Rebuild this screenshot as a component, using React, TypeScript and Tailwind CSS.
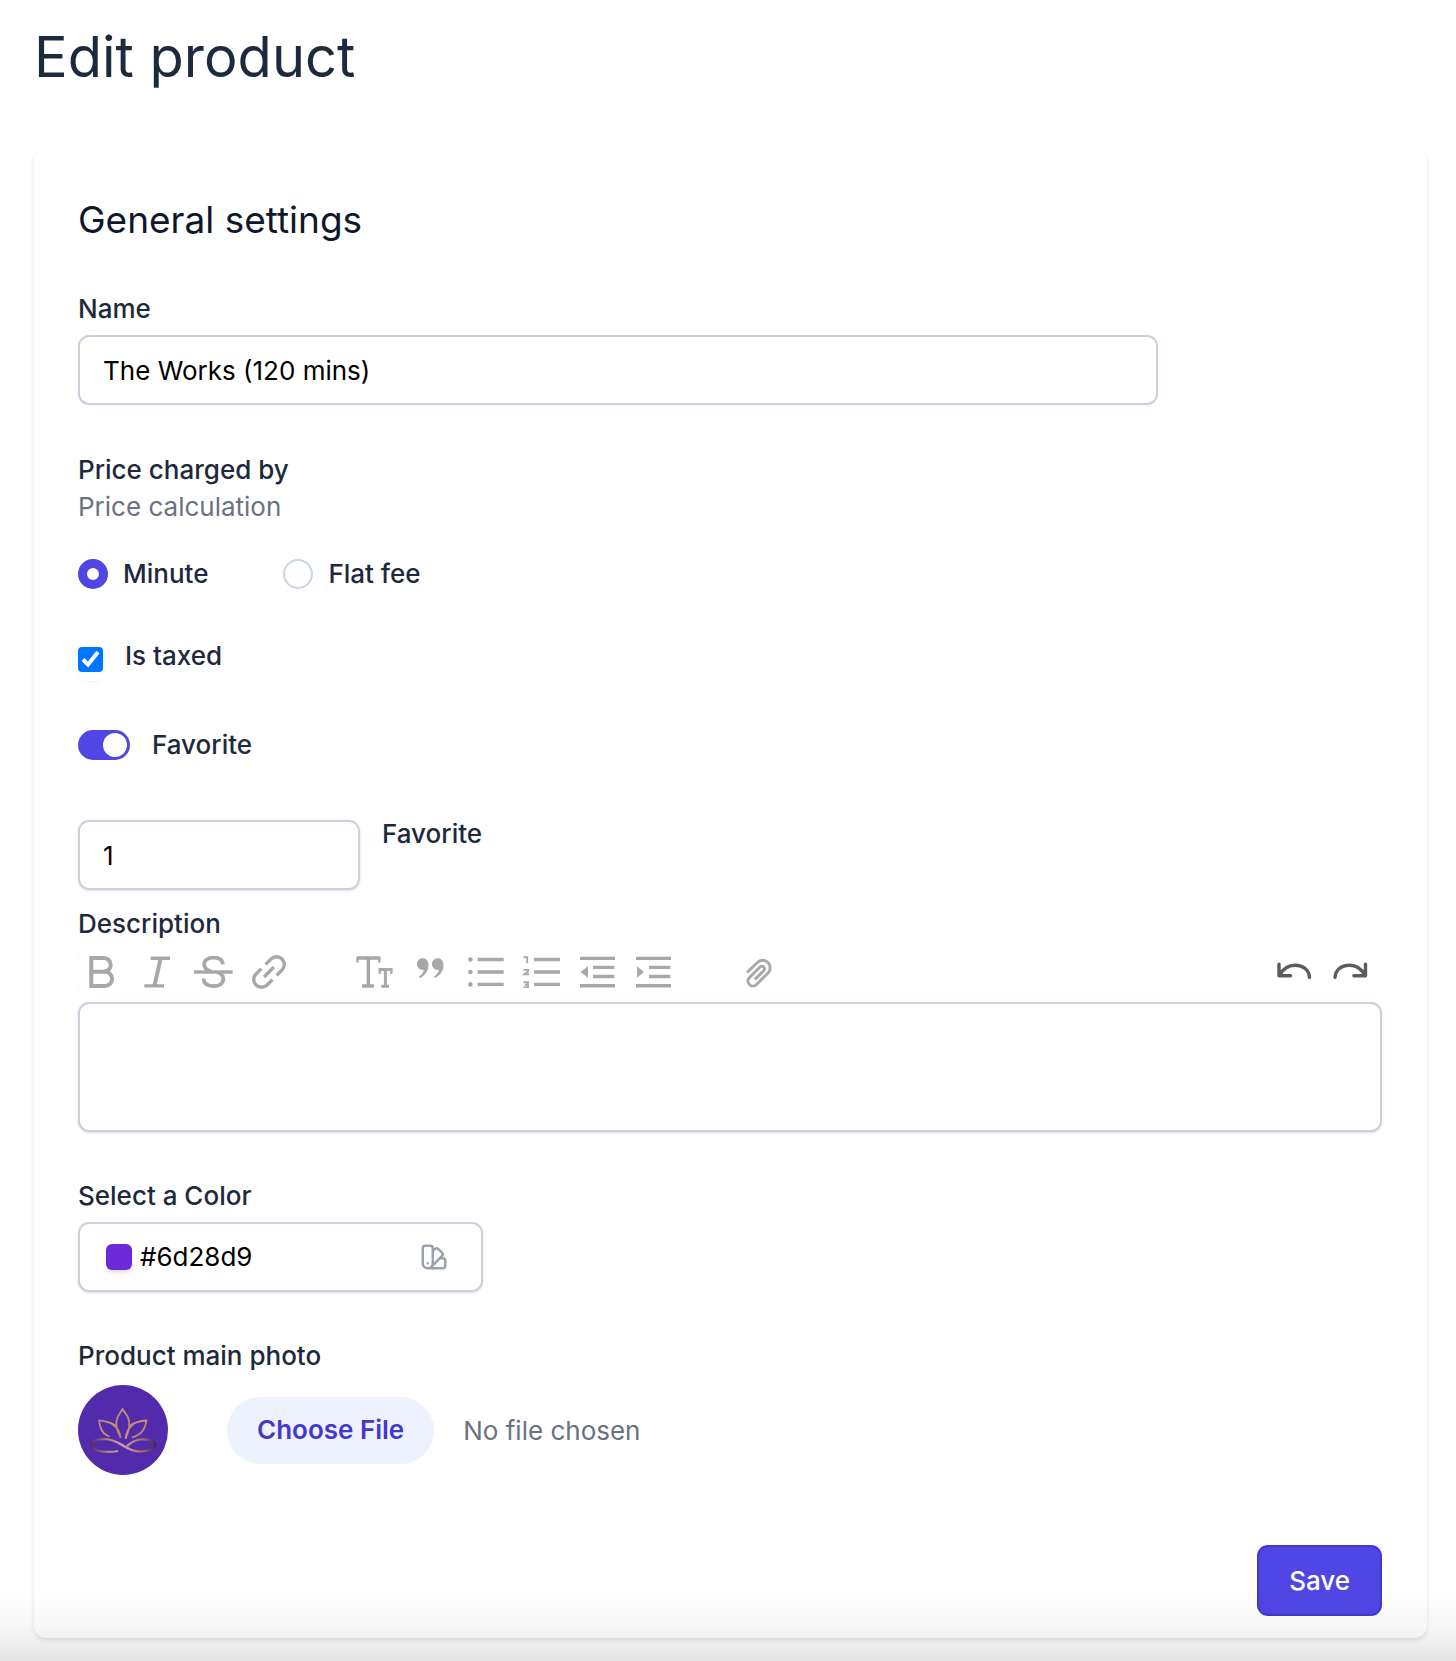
import React, { ReactNode } from "react";
import { HiOutlineColorSwatch } from "react-icons/hi";

type ToolProps = {
  label: string;
  children: ReactNode;
  dark?: boolean;
};

const Tool = ({ label, children, dark }: ToolProps) => {
  return (
    <button
      type="button"
      aria-label={label}
      className={
        dark ? "size-12 shrink-0 text-[#5c5c5c]" : "size-12 shrink-0 text-[#a8a8a8]"
      }
    >
      <svg
        viewBox="0 0 48 48"
        className="size-12"
        fill="none"
        stroke="currentColor"
        strokeWidth="3.4"
      >
        {children}
      </svg>
    </button>
  );
};

const Toolbar = () => {
  return (
    <div className="mt-1.5 flex gap-14 rounded-xl pr-2 shadow-[0_0_2px_rgba(0,0,0,0.06)]">
      <div className="flex gap-2">
        <Tool label="Bold">
          <path
            strokeWidth="4"
            d="M13.3 10H25.8a6.8 6.8 0 0 1 0 13.8H13.3ZM13.3 23.8H27a7.1 7.1 0 0 1 0 14.2H13.3Z"
          />
        </Tool>
        <Tool label="Italic">
          <path d="M16.7 10.3H36M10.3 37.9H30" />
          <path strokeWidth="4" d="M26.6 10.5 20.4 38" />
        </Tool>
        <Tool label="Strikethrough">
          <path
            strokeWidth="3.8"
            d="M33 16.4C32.5 12 29 9.7 23.6 9.7c-5.6 0-9.4 2.7-9.4 6.9 0 3.6 2.4 5.6 7 7M27.5 24.2c4 1.3 5.8 3.4 5.8 6.5 0 4.6-3.8 7.4-9.6 7.4-6.2 0-10-2.8-10.3-7.6"
          />
          <path d="M4 24H42.7" />
        </Tool>
        <Tool label="Link">
          <g transform="translate(23 24) rotate(-45)">
            <path d="M-3-7.8H-10.6a7.8 7.8 0 0 0 0 15.6H-3M3-7.8H10.6a7.8 7.8 0 0 1 0 15.6H3M-7 0H7" />
          </g>
        </Tool>
      </div>
      <div className="flex gap-2">
        <Tool label="Heading">
          <path d="M6.5 10H30.3M18.3 10V38M12 38H24" />
          <path strokeWidth="2.4" d="M7.5 10V14.5M29.2 10V14.5M29.8 21V25.8M41.3 21V25.8" />
          <path strokeWidth="3" d="M28.7 21.4H42.4M35.4 21V38M31.3 38.2H39" />
        </Tool>
        <Tool label="Quote">
          <g fill="currentColor" stroke="none">
            <path d="M16.5 10.2c3.6 0 6 2.7 6 7 0 5.6-3.5 10.3-8.6 12.9l-.9-1.5c2.9-1.9 4.5-4.2 4.8-6.8-3.8.8-6.8-2-6.8-5.7 0-3.3 2.4-5.9 5.5-5.9Z" />
            <path d="M31.5 10.2c3.6 0 6 2.7 6 7 0 5.6-3.5 10.3-8.6 12.9l-.9-1.5c2.9-1.9 4.5-4.2 4.8-6.8-3.8.8-6.8-2-6.8-5.7 0-3.3 2.4-5.9 5.5-5.9Z" />
          </g>
        </Tool>
        <Tool label="Bullets">
          <path d="M15.7 11.5H41.7M15.7 24H41.7M15.7 36.4H41.7" />
          <g fill="currentColor" stroke="none">
            <circle cx="8.4" cy="11.5" r="2.3" />
            <circle cx="8.4" cy="24" r="2.3" />
            <circle cx="8.4" cy="36.4" r="2.3" />
          </g>
        </Tool>
        <Tool label="Numbers">
          <path d="M16 11.5H42M16 24H42M16 36.4H42" />
          <path
            strokeWidth="1.9"
            d="M5.5 9.3H9.2V15.3M5.5 21.9H10.2V23.3L6.4 26.3H11M5.5 34.2H10V36.7H7M10 36.7V39.1H5.5"
          />
        </Tool>
        <Tool label="Decrease level">
          <path d="M6 10.4H41M6 37.8H41M19 19.4H40.3M19 28.5H40.3" />
          <path fill="currentColor" stroke="none" d="M6.5 24 14 18.3V29.7Z" />
        </Tool>
        <Tool label="Increase level">
          <path d="M6 10.4H41M6 37.8H41M19 19.4H40.3M19 28.5H40.3" />
          <path fill="currentColor" stroke="none" d="M14 24 7 18.3V29.7Z" />
        </Tool>
      </div>
      <div className="flex">
        <Tool label="Attach files">
          <path
            strokeWidth="3"
            d="M13 24.5 23.5 14.5A7.4 7.4 0 0 1 34 25L22.5 36.5A4.9 4.9 0 0 1 15.5 29.5L26 19A2.6 2.6 0 0 1 29.7 22.7L21 31.4"
          />
        </Tool>
      </div>
      <div className="ml-auto flex gap-2">
        <Tool label="Undo" dark>
          <path
            strokeLinecap="round"
            strokeLinejoin="round"
            d="M9 16.3V27.7H20.6M9.5 27.2C13 20.8 18 17.2 25 17.2c8.2 0 14 4.8 14.5 12.2"
          />
        </Tool>
        <Tool label="Redo" dark>
          <path
            strokeLinecap="round"
            strokeLinejoin="round"
            d="M39.5 16.3V27.7H27.9M39 27.2C35.5 20.8 30.5 17.2 23.5 17.2c-8.2 0-14 4.8-14.5 12.2"
          />
        </Tool>
      </div>
    </div>
  );
};

const Lotus = () => {
  return (
    <svg viewBox="0 0 90 90" className="size-[90px] shrink-0 rounded-full bg-[#512bac]">
      <defs>
        <linearGradient id="petal" x1="0" y1="0" x2="1" y2="1">
          <stop offset="0" stopColor="#b08088" />
          <stop offset="0.4" stopColor="#c8946f" />
          <stop offset="1" stopColor="#b07a6c" />
        </linearGradient>
        <linearGradient id="base" x1="0" y1="0" x2="1" y2="0">
          <stop offset="0" stopColor="#5a3050" />
          <stop offset="0.25" stopColor="#b0807f" />
          <stop offset="0.5" stopColor="#d3a3a0" />
          <stop offset="0.8" stopColor="#a8706a" />
          <stop offset="1" stopColor="#4a2648" />
        </linearGradient>
      </defs>
      <g fill="none" stroke="url(#petal)" strokeWidth="1.8" strokeLinejoin="round">
        <path d="M42.5 52C38.5 45 36.5 39 39.5 32.5 41 29 43 27 44.5 24 46 27 48.5 29 50 32.5 53 39 51 46 47.5 54" />
        <path d="M37.5 40.5C33 37.5 27 36 21 35.5 22 42 23.5 49 31.500 51.5M34 39C40 43 42.3 48 42.500 53" />
        <path d="M52 40.5C56.5 37.5 62 36 68.5 35.5 67.5 42 65.5 49 54 52.5M55.5 39C50.500 43 48 48 47.500 54" />
      </g>
      <path
        fill="none"
        stroke="url(#base)"
        strokeWidth="2.2"
        d="M40 66C26 68.5 13 65.5 13 60 13 55.500 20 54 27 54 43 54.500 47 66.500 62 66.500 70 66.500 77 64 77 60 77 55.500 69 54 62 54.500 55 55.500 52 58.500 49 61"
      />
    </svg>
  );
};

const App = () => {
  return (
    <div className="relative min-h-screen bg-white pt-[27px] pr-[29px] pb-[22px] pl-[34px] font-[Inter,sans-serif] text-[26px] leading-9 text-slate-800">
      <h1 className="text-[56px] leading-[60px]">Edit product</h1>

      <form className="mt-[62px] rounded-xl bg-white pt-[46px] pr-[45px] pb-[22px] pl-11 shadow-[0_2px_4px_rgba(0,0,0,0.12)]">
        <h2 className="text-[37px] leading-[50px] text-slate-900">General settings</h2>

        <div className="mt-[46px]">
          <label htmlFor="name" className="block font-medium">
            Name
          </label>
          <input
            id="name"
            type="text"
            defaultValue="The Works (120 mins)"
            className="mt-2 block h-[70px] w-5/6 max-w-[1080px] rounded-[11px] border-2 border-[#cbd0dc] px-[23px] text-black shadow-xs"
          />
        </div>

        <fieldset className="mt-[47px]">
          <legend className="font-medium">Price charged by</legend>
          <p className="leading-[38px] text-gray-500">Price calculation</p>
          <div className="mt-[30px] flex gap-[75px] font-medium">
            <label className="flex items-center gap-[15px]">
              <input
                type="radio"
                name="charge"
                defaultChecked
                className="size-[30px] appearance-none rounded-full border-2 border-slate-300 bg-white checked:border-9 checked:border-[#4f46e5]"
              />
              Minute
            </label>
            <label className="flex items-center gap-[15px]">
              <input
                type="radio"
                name="charge"
                className="size-[30px] appearance-none rounded-full border-2 border-slate-300 bg-white checked:border-9 checked:border-[#4f46e5]"
              />
              Flat fee
            </label>
          </div>
        </fieldset>

        <div className="mt-[46px] flex gap-[22px] font-medium">
          <div className="mt-[9px] h-[34px] rounded-md shadow-xs">
            <input
              id="taxed"
              type="checkbox"
              defaultChecked
              className="block size-[25px] [clip-path:inset(0_round_4px)]"
            />
          </div>
          <label htmlFor="taxed">Is taxed</label>
        </div>

        <div className="mt-[46px] flex items-center gap-[22px] font-medium">
          <input
            id="favorite"
            type="checkbox"
            role="switch"
            defaultChecked
            className="flex h-[30px] w-[52px] appearance-none items-center rounded-full bg-slate-300 px-[3px] before:size-6 before:rounded-full before:bg-white checked:justify-end checked:bg-[#4f46e5]"
          />
          <label htmlFor="favorite">Favorite</label>
        </div>

        <div className="mt-[53px] flex gap-[22px]">
          <input
            id="position"
            type="text"
            inputMode="numeric"
            defaultValue="1"
            className="mt-1 h-[70px] w-[282px] rounded-[11px] border-2 border-[#cbd0dc] px-[23px] text-black shadow-sm"
          />
          <label htmlFor="position" className="font-medium">
            Favorite
          </label>
        </div>

        <div className="mt-4">
          <label htmlFor="description" className="block font-medium">
            Description
          </label>
          <Toolbar />
          <textarea
            id="description"
            className="mt-1.5 block h-[130px] w-full resize-none rounded-[11px] border-2 border-[#cbd0dc] px-[23px] py-4 text-black shadow-sm"
          />
        </div>

        <div className="mt-[46px]">
          <label htmlFor="color" className="block font-medium">
            Select a Color
          </label>
          <div className="mt-2 flex h-[70px] w-[405px] items-center rounded-[11px] border-2 border-[#cbd0dc] pr-8 pl-[26px] shadow-sm">
            <span className="size-[26px] shrink-0 rounded-md bg-[#6d28d9] shadow-md" />
            <input
              id="color"
              type="text"
              defaultValue="#6d28d9"
              className="ml-2 min-w-0 grow text-black"
            />
            <button type="button" aria-label="Open palette" className="text-gray-400">
              <HiOutlineColorSwatch className="size-[30px]" />
            </button>
          </div>
        </div>

        <div className="mt-[46px]">
          <label htmlFor="photo" className="block font-medium">
            Product main photo
          </label>
          <div className="mt-[11px] flex items-center gap-[59px]">
            <Lotus />
            <input
              id="photo"
              type="file"
              className="grow text-gray-500 file:mr-[29px] file:h-[67px] file:rounded-full file:bg-[#eef2ff] file:px-[30px] file:font-semibold file:text-[#4338ca]"
            />
          </div>
        </div>

        <div className="mt-[70px] flex justify-end">
          <button
            type="submit"
            className="h-[71px] rounded-[11px] border-2 border-[#4338ca] bg-[#4f46e5] px-[30px] font-medium text-white"
          >
            Save
          </button>
        </div>
      </form>

      <div className="pointer-events-none absolute inset-x-0 bottom-0 h-[72px] bg-linear-to-t from-black/10 via-black/3 to-transparent" />
    </div>
  );
};

export default App;
